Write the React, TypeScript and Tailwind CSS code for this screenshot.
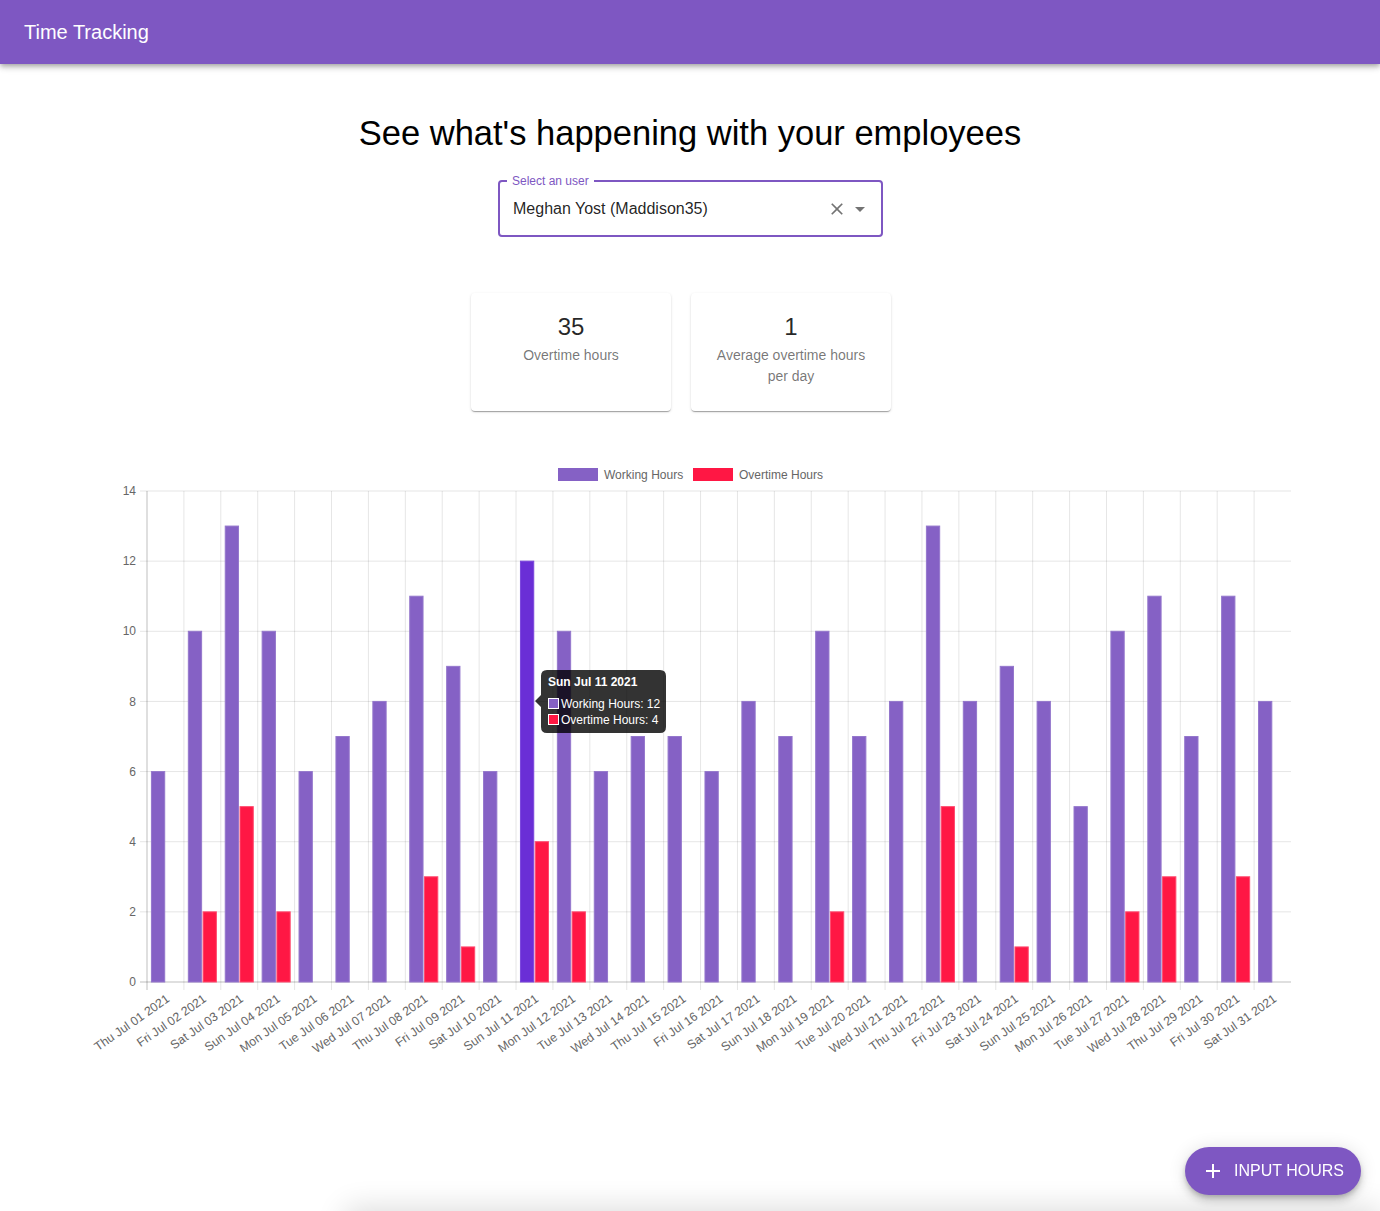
import React from "react";

const working = [6, 10, 13, 10, 6, 7, 8, 11, 9, 6, 12, 10, 6, 7, 7, 6, 8, 7, 10, 7, 8, 13, 8, 9, 8, 5, 10, 11, 7, 11, 8];
const overtime = [0, 2, 5, 2, 0, 0, 0, 3, 1, 0, 4, 2, 0, 0, 0, 0, 0, 0, 2, 0, 0, 5, 0, 1, 0, 0, 2, 3, 0, 3, 0];
const dayNames = ["Thu", "Fri", "Sat", "Sun", "Mon", "Tue", "Wed"];
const labels = working.map((_, i) => `${dayNames[i % 7]} Jul ${String(i + 1).padStart(2, "0")} 2021`);

// chart area, page coordinates
const L = 147;
const R = 1291;
const T = 491;
const B = 982;
const CW = (R - L) / 31;
const UNIT = (B - T) / 14;
const HOVER = 10;

function Chart() {
  const per = (CW * 0.8) / 2;
  const bw = per * 0.9;
  return (
    <svg width={1380} height={600} className="block" style={{ fontFamily: "'Liberation Sans', Arial, sans-serif" }}>
      <g transform="translate(0,-460)">
        {/* legend */}
        <rect x={558} y={468} width={40} height={13} fill="#8561c5" />
        <text x={604} y={476} fontSize={12} fill="#666" dominantBaseline="middle">Working Hours</text>
        <rect x={693} y={468} width={40} height={13} fill="#ff1744" />
        <text x={739} y={476} fontSize={12} fill="#666" dominantBaseline="middle">Overtime Hours</text>

        {/* horizontal grid + y labels */}
        {[0, 2, 4, 6, 8, 10, 12, 14].map((v) => {
          const y = B - v * UNIT;
          return (
            <g key={v}>
              <line x1={140} x2={R} y1={y} y2={y} stroke={v === 0 ? "rgba(0,0,0,0.25)" : "rgba(0,0,0,0.1)"} />
              <text x={136} y={y + 1} fontSize={12} fill="#666" textAnchor="end" dominantBaseline="middle">{v}</text>
            </g>
          );
        })}

        {/* vertical grid */}
        {Array.from({ length: 31 }).map((_, i) => {
          const x = L + i * CW;
          return <line key={i} x1={x} x2={x} y1={T} y2={990} stroke={i === 0 ? "rgba(0,0,0,0.25)" : "rgba(0,0,0,0.1)"} />;
        })}

        {/* bars */}
        {working.map((w, i) => {
          const x0 = L + i * CW + CW * 0.1 + per * 0.05;
          const o = overtime[i];
          return (
            <g key={i}>
              <rect
                x={x0}
                y={B - w * UNIT}
                width={bw}
                height={w * UNIT}
                fill={i === HOVER ? "#6a2ed6" : "#8561c5"}
                stroke={i === HOVER ? "#7a45dc" : "#9477cc"}
                strokeWidth={1}
              />
              {o > 0 && (
                <rect x={x0 + per} y={B - o * UNIT} width={bw} height={o * UNIT} fill="#ff1744" stroke="#ff4a6e" strokeWidth={1} />
              )}
            </g>
          );
        })}

        {/* x labels */}
        {labels.map((lab, i) => {
          const cx = L + (i + 0.5) * CW + 3;
          return (
            <text
              key={lab}
              x={cx}
              y={998}
              fontSize={12.3}
              fill="#666"
              textAnchor="end"
              dominantBaseline="middle"
              transform={`rotate(-35 ${cx} 998)`}
            >
              {lab}
            </text>
          );
        })}

        {/* tooltip */}
        <g>
          <path
            d="M547 670 H660 Q666 670 666 676 V727 Q666 733 660 733 H547 Q541 733 541 727 V707 L535 701 L541 695 V676 Q541 670 547 670 Z"
            fill="rgba(0,0,0,0.8)"
          />
          <text x={548} y={683} fontSize={12} fontWeight={700} fill="#fff" dominantBaseline="middle">Sun Jul 11 2021</text>
          <rect x={548.5} y={698.5} width={10} height={10} fill="#8561c5" stroke="#fff" />
          <text x={561} y={704.5} fontSize={12} fill="#fff" dominantBaseline="middle">Working Hours: 12</text>
          <rect x={548.5} y={714.5} width={10} height={10} fill="#ff1744" stroke="#fff" />
          <text x={561} y={720.5} fontSize={12} fill="#fff" dominantBaseline="middle">Overtime Hours: 4</text>
        </g>
      </g>
    </svg>
  );
}

function StatCard({ value, label }: { value: string; label: string }) {
  return (
    <div className="w-[200px] h-[118px] rounded bg-white px-4 pt-[18px] text-center shadow-[0_2px_1px_-1px_rgba(0,0,0,0.2),0_1px_1px_0_rgba(0,0,0,0.14),0_1px_3px_0_rgba(0,0,0,0.12)]">
      <div className="text-[24px] leading-8 text-black/85">{value}</div>
      <div className="mt-[2px] text-[14px] leading-[21px] text-black/55">{label}</div>
    </div>
  );
}

export default function App() {
  return (
    <div className="relative h-[1211px] overflow-hidden bg-white font-['Liberation_Sans',Arial,sans-serif]">
      <header className="relative z-10 flex h-16 items-center bg-[#7e57c2] px-6 shadow-[0_2px_4px_-1px_rgba(0,0,0,0.2),0_4px_5px_0_rgba(0,0,0,0.14),0_1px_10px_0_rgba(0,0,0,0.12)]">
        <h1 className="text-[20px] leading-8 text-white">Time Tracking</h1>
      </header>

      <main className="flex flex-col items-center">
        <h2 className="mt-[49px] text-[34.5px] leading-[40px] text-black">See what's happening with your employees</h2>

        <div className="relative mt-[27px] ml-[1px] flex h-[57px] w-[385px] items-center rounded border-2 border-[#7e57c2] pl-[13px] pr-[9px]">
          <span className="absolute -top-[8px] left-[7px] bg-white px-[5px] text-[12px] leading-[14px] text-[#7e57c2]">Select an user</span>
          <span className="flex-1 text-[16px] text-black/87">Meghan Yost (Maddison35)</span>
          <svg width="20" height="20" viewBox="0 0 24 24" className="fill-black/55">
            <path d="M19 6.41L17.59 5 12 10.59 6.41 5 5 6.41 10.59 12 5 17.59 6.41 19 12 13.41 17.59 19 19 17.59 13.41 12z" />
          </svg>
          <svg width="24" height="24" viewBox="0 0 24 24" className="ml-[1px] fill-black/55">
            <path d="M7 10l5 5 5-5z" />
          </svg>
        </div>

        <div className="mt-[56px] mr-[18px] flex gap-5">
          <StatCard value="35" label="Overtime hours" />
          <StatCard value="1" label="Average overtime hours per day" />
        </div>

        <div className="mt-[49px] self-stretch">
          <Chart />
        </div>
      </main>

      <div className="absolute left-[345px] right-0 top-[1214px] h-10 rounded-tl-lg bg-white shadow-[0_-6px_30px_rgba(0,0,0,0.14)]" />

      <button className="fixed bottom-4 right-[19px] flex h-12 w-[176px] items-center gap-[9px] rounded-full bg-[#7e57c2] pl-[16px] text-[16px] text-white shadow-[0_3px_5px_-1px_rgba(0,0,0,0.2),0_6px_10px_0_rgba(0,0,0,0.14),0_1px_18px_0_rgba(0,0,0,0.12)]">
        <svg width="24" height="24" viewBox="0 0 24 24" className="fill-white">
          <path d="M19 13h-6v6h-2v-6H5v-2h6V5h2v6h6v2z" />
        </svg>
        <span>INPUT HOURS</span>
      </button>
    </div>
  );
}
